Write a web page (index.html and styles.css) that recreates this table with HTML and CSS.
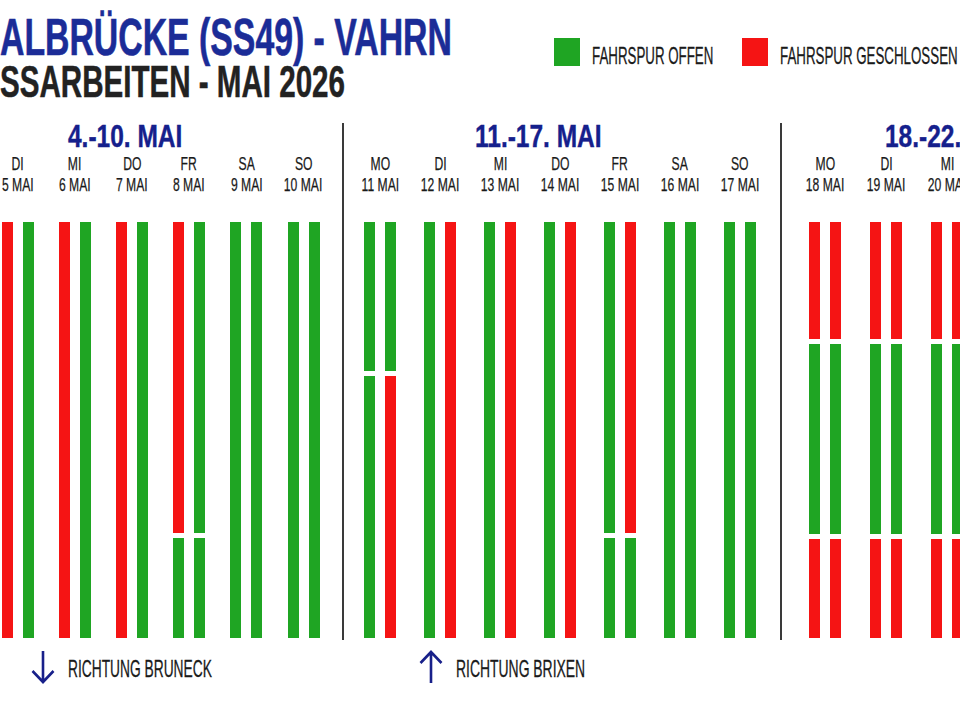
FILE: index.html
```html
<!DOCTYPE html>
<html lang="de">
<head>
<meta charset="utf-8">
<title>Talbrücke (SS49) - Vahrn</title>
<link rel="stylesheet" href="styles.css">
</head>
<body>
<div class="page">
  <header class="header">
    <div class="titles">
      <h1 class="title-main">ALBRÜCKE (SS49) - VAHRN</h1>
      <h2 class="title-sub">SSARBEITEN - MAI 2026</h2>
    </div>
    <div class="legend">
      <div class="legend-item">
        <span class="swatch g"></span>
        <span class="legend-label open"><span>FAHRSPUR OFFEN</span></span>
      </div>
      <div class="legend-item">
        <span class="swatch r"></span>
        <span class="legend-label closed"><span>FAHRSPUR GESCHLOSSEN</span></span>
      </div>
    </div>
  </header>

  <main class="chart">
    <section class="week week-1">
      <div class="week-title"><span>4.-10. MAI</span></div>
      <div class="days">
        <div class="day"><div class="day-label">DI</div><div class="day-label">5 MAI</div>
          <div class="bars"><div class="bar"><div class="seg r"></div></div><div class="bar"><div class="seg g"></div></div></div></div>
        <div class="day"><div class="day-label">MI</div><div class="day-label">6 MAI</div>
          <div class="bars"><div class="bar"><div class="seg r"></div></div><div class="bar"><div class="seg g"></div></div></div></div>
        <div class="day"><div class="day-label">DO</div><div class="day-label">7 MAI</div>
          <div class="bars"><div class="bar"><div class="seg r"></div></div><div class="bar"><div class="seg g"></div></div></div></div>
        <div class="day"><div class="day-label">FR</div><div class="day-label">8 MAI</div>
          <div class="bars"><div class="bar"><div class="seg r" style="flex:0 0 311px"></div><div class="seg g"></div></div><div class="bar"><div class="seg g" style="flex:0 0 311px"></div><div class="seg g"></div></div></div></div>
        <div class="day"><div class="day-label">SA</div><div class="day-label">9 MAI</div>
          <div class="bars"><div class="bar"><div class="seg g"></div></div><div class="bar"><div class="seg g"></div></div></div></div>
        <div class="day"><div class="day-label">SO</div><div class="day-label">10 MAI</div>
          <div class="bars"><div class="bar"><div class="seg g"></div></div><div class="bar"><div class="seg g"></div></div></div></div>
      </div>
    </section>
    <div class="divider"></div>
    <section class="week week-2">
      <div class="week-title"><span>11.-17. MAI</span></div>
      <div class="days">
        <div class="day"><div class="day-label">MO</div><div class="day-label">11 MAI</div>
          <div class="bars"><div class="bar"><div class="seg g" style="flex:0 0 149px"></div><div class="seg g"></div></div><div class="bar"><div class="seg g" style="flex:0 0 149px"></div><div class="seg r"></div></div></div></div>
        <div class="day"><div class="day-label">DI</div><div class="day-label">12 MAI</div>
          <div class="bars"><div class="bar"><div class="seg g"></div></div><div class="bar"><div class="seg r"></div></div></div></div>
        <div class="day"><div class="day-label">MI</div><div class="day-label">13 MAI</div>
          <div class="bars"><div class="bar"><div class="seg g"></div></div><div class="bar"><div class="seg r"></div></div></div></div>
        <div class="day"><div class="day-label">DO</div><div class="day-label">14 MAI</div>
          <div class="bars"><div class="bar"><div class="seg g"></div></div><div class="bar"><div class="seg r"></div></div></div></div>
        <div class="day"><div class="day-label">FR</div><div class="day-label">15 MAI</div>
          <div class="bars"><div class="bar"><div class="seg g" style="flex:0 0 311px"></div><div class="seg g"></div></div><div class="bar"><div class="seg r" style="flex:0 0 311px"></div><div class="seg g"></div></div></div></div>
        <div class="day"><div class="day-label">SA</div><div class="day-label">16 MAI</div>
          <div class="bars"><div class="bar"><div class="seg g"></div></div><div class="bar"><div class="seg g"></div></div></div></div>
        <div class="day"><div class="day-label">SO</div><div class="day-label">17 MAI</div>
          <div class="bars"><div class="bar"><div class="seg g"></div></div><div class="bar"><div class="seg g"></div></div></div></div>
      </div>
    </section>
    <div class="divider"></div>
    <section class="week week-3">
      <div class="week-title"><span>18.-22. MAI</span></div>
      <div class="days">
        <div class="day"><div class="day-label">MO</div><div class="day-label">18 MAI</div>
          <div class="bars"><div class="bar"><div class="seg r" style="flex:0 0 117px"></div><div class="seg g" style="flex:0 0 190px"></div><div class="seg r"></div></div><div class="bar"><div class="seg r" style="flex:0 0 117px"></div><div class="seg g" style="flex:0 0 190px"></div><div class="seg r"></div></div></div></div>
        <div class="day"><div class="day-label">DI</div><div class="day-label">19 MAI</div>
          <div class="bars"><div class="bar"><div class="seg r" style="flex:0 0 117px"></div><div class="seg g" style="flex:0 0 190px"></div><div class="seg r"></div></div><div class="bar"><div class="seg r" style="flex:0 0 117px"></div><div class="seg g" style="flex:0 0 190px"></div><div class="seg r"></div></div></div></div>
        <div class="day"><div class="day-label">MI</div><div class="day-label">20 MAI</div>
          <div class="bars"><div class="bar"><div class="seg r" style="flex:0 0 117px"></div><div class="seg g" style="flex:0 0 190px"></div><div class="seg r"></div></div><div class="bar"><div class="seg r" style="flex:0 0 117px"></div><div class="seg g" style="flex:0 0 190px"></div><div class="seg r"></div></div></div></div>
      </div>
    </section>
  </main>

  <footer class="footer">
    <div class="dir dir-1">
      <svg viewBox="0 0 24 34" aria-hidden="true"><path d="M12 1V32M1.5 21L12 32L22.5 21"/></svg>
      <span class="dir-label"><span>RICHTUNG BRUNECK</span></span>
    </div>
    <div class="dir dir-2">
      <svg viewBox="0 0 24 34" aria-hidden="true"><path d="M12 33V2M1.5 13L12 2L22.5 13"/></svg>
      <span class="dir-label"><span>RICHTUNG BRIXEN</span></span>
    </div>
  </footer>
</div>
</body>
</html>
```

FILE: styles.css
```css
* { box-sizing: border-box; margin: 0; padding: 0; }

body {
  margin: 0;
  width: 960px;
  height: 720px;
  overflow: hidden;
  background: #ffffff;
  font-family: "Liberation Sans", Arial, sans-serif;
  color: #1a1a1a;
}

.page {
  width: 960px;
  height: 720px;
  overflow: hidden;
}

/* ---------- header ---------- */
.header {
  display: flex;
  height: 110px;
}

.titles {
  flex: 0 0 554px;
  min-width: 0;
  width: 554px;
  padding-top: 14px;
}

.title-main {
  font-weight: 700;
  font-size: 52px;
  line-height: 46px;
  height: 46px;
  color: #1b2c97;
  white-space: nowrap;
  transform: scaleX(0.65);
  transform-origin: 0 0;
  -webkit-text-stroke: 0.6px #1b2c97;
}

.title-sub {
  margin-top: 3px;
  font-weight: 700;
  font-size: 45px;
  line-height: 37px;
  height: 37px;
  color: #222222;
  white-space: nowrap;
  transform: scaleX(0.657);
  transform-origin: 0 0;
  -webkit-text-stroke: 0.5px #222222;
}

.legend {
  display: flex;
  padding-top: 38px;
}

.legend-item {
  display: flex;
  align-items: flex-start;
}

.swatch {
  display: block;
  width: 26px;
  height: 28px;
}

.legend-label {
  display: block;
  margin-left: 12px;
  padding-top: 4px;
  font-size: 24px;
  line-height: 28px;
  white-space: nowrap;
  color: #1a1a1a;
}

.legend-label span {
  display: inline-block;
  transform: scaleX(0.555);
  transform-origin: 0 50%;
  -webkit-text-stroke: 0.3px #1a1a1a;
}

.legend-label.open { width: 122px; margin-right: 28px; }
.legend-label.closed { width: 178px; }

/* ---------- chart ---------- */
.chart {
  display: flex;
  height: 517px;
  margin-top: 13px;
}

.divider {
  flex: 0 0 2px;
  background: #3a3a3a;
}

.week {
  display: flex;
  flex-direction: column;
}

.week-1 { margin-left: -11px; padding-right: 10px; }
.week-2 { padding-left: 6px; padding-right: 10px; }
.week-3 { padding-left: 12.5px; }

.week-title {
  height: 27px;
  font-weight: 700;
  font-size: 31px;
  line-height: 27px;
  color: #15208c;
  white-space: nowrap;
}

.week-title span {
  display: inline-block;
  transform: scaleX(0.79);
  transform-origin: 0 0;
  -webkit-text-stroke: 0.4px #15208c;
}

.week-1 .week-title { padding-left: 79px; }
.week-2 .week-title { padding-left: 125px; }
.week-3 .week-title { padding-left: 90.5px; }

.days {
  display: flex;
  margin-top: 3px;
}

.day {
  display: flex;
  flex-direction: column;
  align-items: center;
}

.week-1 .day { width: 57.2px; }
.week-2 .day { width: 60px; }
.week-3 .day { width: 61px; }

.day-label {
  font-size: 19px;
  line-height: 21px;
  white-space: nowrap;
  color: #1a1a1a;
  transform: scaleX(0.64);
  -webkit-text-stroke: 0.25px #1a1a1a;
}

.bars {
  display: flex;
  gap: 10px;
  height: 416px;
  margin-top: 27px;
}

.bar {
  width: 11px;
  display: flex;
  flex-direction: column;
  gap: 5px;
}

.seg { flex: 1 1 0; }

.g { background: #1fa523; }
.r { background: #f51414; }

/* ---------- footer ---------- */
.footer {
  display: flex;
  align-items: flex-start;
  padding-top: 10px;
}

.dir {
  display: flex;
  align-items: flex-start;
}

.dir svg {
  width: 24px;
  height: 34px;
  fill: none;
  stroke: #18208a;
  stroke-width: 2.6;
  stroke-linecap: butt;
  stroke-linejoin: miter;
}

.dir-1 { margin-left: 31px; }
.dir-2 { margin-left: 207px; }

.dir-label {
  display: block;
  margin-left: 13px;
  padding-top: 5px;
  font-size: 24px;
  line-height: 28px;
  white-space: nowrap;
  color: #1a1a1a;
}

.dir-1 .dir-label { width: 144px; }
.dir-2 .dir-label { width: 130px; }

.dir-label span {
  display: inline-block;
  transform: scaleX(0.574);
  transform-origin: 0 0;
  -webkit-text-stroke: 0.3px #1a1a1a;
}

.dir-2 .dir-label span { transform: scaleX(0.58); }
```
